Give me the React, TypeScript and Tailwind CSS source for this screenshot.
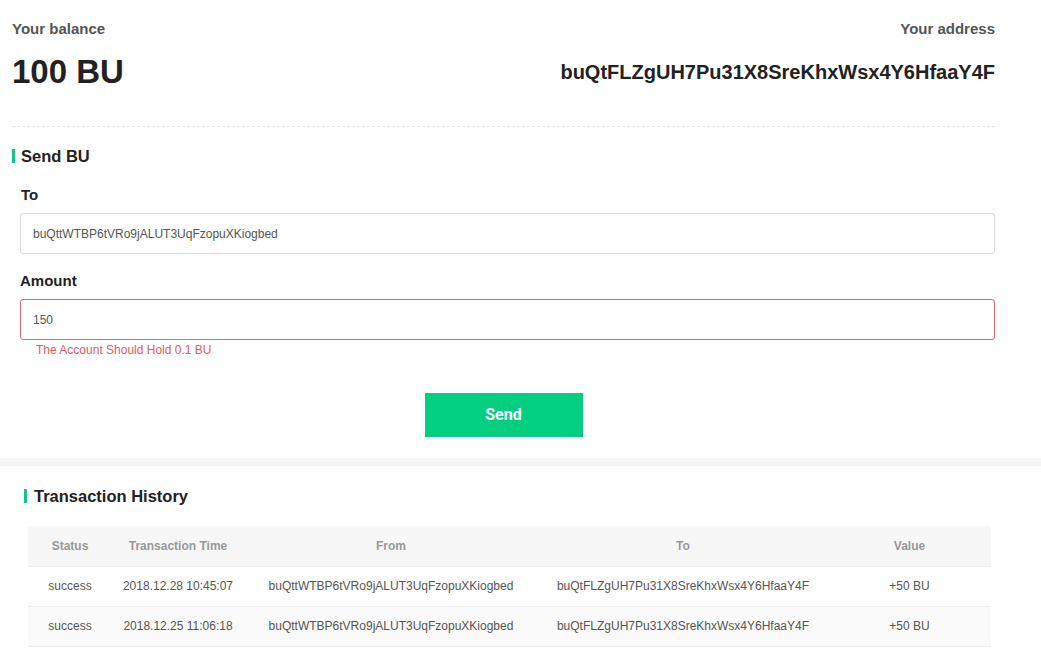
import React from 'react';

const ADDRESS = 'buQtFLZgUH7Pu31X8SreKhxWsx4Y6HfaaY4F';
const FROM = 'buQttWTBP6tVRo9jALUT3UqFzopuXKiogbed';

const history = [
  { status: 'success', time: '2018.12.28 10:45:07', from: FROM, to: ADDRESS, value: '+50 BU' },
  { status: 'success', time: '2018.12.25 11:06:18', from: FROM, to: ADDRESS, value: '+50 BU' },
];

const SectionTitle: React.FC<{ title: string; className?: string; text?: string }> = ({ title, className, text }) => (
  <div className={`flex items-center ${className ?? ''}`}>
    <span className="w-[3px] h-[14px] bg-[#12c587]" />
    <span className={`font-bold text-[#222] ml-[6px] ${text ?? 'text-[16px]'}`}>{title}</span>
  </div>
);

export default function App() {
  return (
    <div className="w-[1041px] bg-white font-['Liberation_Sans',Arial,sans-serif] text-[#333]">
      {/* Balance + address */}
      <div className="pl-[12px] pr-[46px]">
        <div className="flex justify-between pt-[19px]">
          <div>
            <div className="h-[20px] leading-[20px] text-[15px] font-bold text-[#555]">Your balance</div>
            <div className="mt-[13px] h-[40px] leading-[40px] text-[33px] font-bold text-[#222]">100 BU</div>
          </div>
          <div className="text-right">
            <div className="h-[20px] leading-[20px] text-[15px] font-bold text-[#555]">Your address</div>
            <div className="mt-[13px] h-[40px] leading-[40px] text-[20px] font-bold text-[#222]">{ADDRESS}</div>
          </div>
        </div>
        <div className="mt-[34px] border-t border-dashed border-[#e6e6e6]" />

        {/* Send form */}
        <SectionTitle title="Send BU" className="mt-[19px] h-[20px]" text="text-[16.5px]" />
        <div className="pl-[8px]">
          <div className="mt-[19px] h-[20px] leading-[20px] text-[15px] font-bold text-[#222] pl-[1px]">To</div>
          <div className="mt-[8px] h-[41px] border border-[#dcdcdc] rounded-[3px] flex items-center px-[12px] text-[12px] text-[#555]">
            {FROM}
          </div>
          <div className="mt-[17px] h-[20px] leading-[20px] text-[15px] font-bold text-[#222]">Amount</div>
          <div className="mt-[8px] h-[41px] border border-[#dc6b74] rounded-[3px] flex items-center px-[12px] text-[12px] text-[#555]">
            150
          </div>
          <div className="mt-[2px] h-[16px] leading-[16px] text-[12px] text-[#e8585e] pl-[16px]">The Account Should Hold 0.1 BU</div>
        </div>
        <div className="mt-[35px] flex justify-center">
          <button className="w-[158px] h-[44px] bg-[#02cf80] text-white text-[16px] font-bold font-['Roboto',sans-serif]">
            Send
          </button>
        </div>
      </div>

      <div className="mt-[21px] h-[8px] bg-[#f5f5f5]" />

      {/* History */}
      <div className="pl-[24px] pr-[50px] pb-[14px]">
        <SectionTitle title="Transaction History" className="mt-[19px] h-[22px]" text="text-[16.5px] ml-[7px]" />
        <table className="mt-[19px] ml-[4px] w-[963px] table-fixed border-collapse text-[12px] text-center">
          <colgroup>
            <col className="w-[84px]" />
            <col className="w-[132px]" />
            <col className="w-[294px]" />
            <col className="w-[290px]" />
            <col />
          </colgroup>
          <thead>
            <tr className="h-[40px] bg-[#f7f7f7] text-[#999] font-bold border-b border-[#ececec]">
              <th>Status</th>
              <th>Transaction Time</th>
              <th>From</th>
              <th>To</th>
              <th>Value</th>
            </tr>
          </thead>
          <tbody className="text-[#555]">
            {history.map((row, i) => (
              <tr key={i} className={`h-[40px] border-b border-[#ececec] ${i % 2 ? 'bg-[#fafafa]' : 'bg-white'}`}>
                <td>{row.status}</td>
                <td>{row.time}</td>
                <td>{row.from}</td>
                <td>{row.to}</td>
                <td>{row.value}</td>
              </tr>
            ))}
          </tbody>
        </table>
      </div>
    </div>
  );
}
